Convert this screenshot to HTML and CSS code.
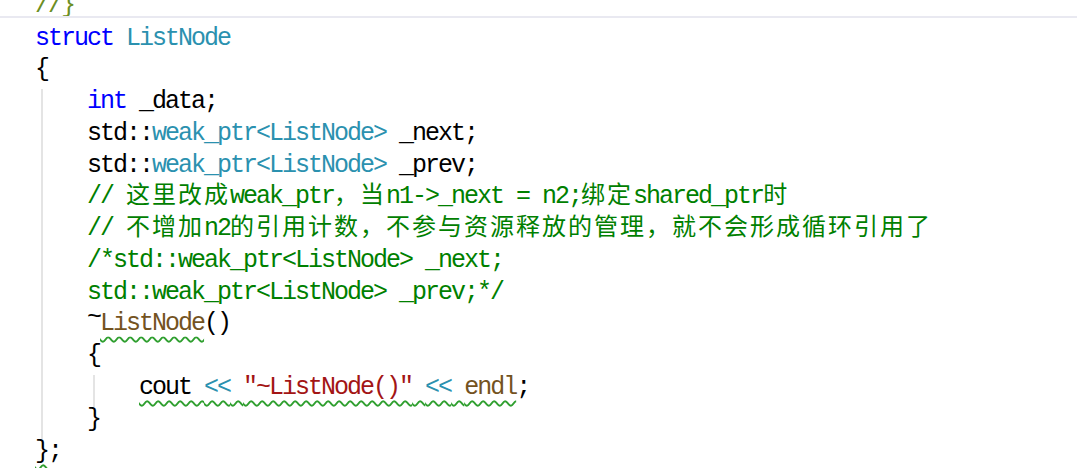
FILE: index.html
```html
<!DOCTYPE html>
<html lang="zh-CN">
<head>
<meta charset="utf-8">
<title>ListNode</title>
<link rel="stylesheet" href="styles.css">
</head>
<body>
<div class="editor">
  <div class="header"><div class="row c-dim">//}</div></div>
  <div class="code">
    <div class="row"><span class="kw">struct</span> <span class="ty">ListNode</span></div>
    <div class="row">{</div>
    <div class="block">
      <div class="row"><span class="kw">int</span> _data;</div>
      <div class="row">std::<span class="ty">weak_ptr&lt;ListNode&gt;</span> _next;</div>
      <div class="row">std::<span class="ty">weak_ptr&lt;ListNode&gt;</span> _prev;</div>
      <div class="row cm">// <span class="cjk">这里改成</span>weak_ptr<span class="cjk">，当</span>n1-&gt;_next = n2;<span class="cjk">绑定</span>shared_ptr<span class="cjk">时</span></div>
      <div class="row cm">// <span class="cjk">不增加</span>n2<span class="cjk">的引用计数，不参与资源释放的管理，就不会形成循环引用了</span></div>
      <div class="row cm">/*std::weak_ptr&lt;ListNode&gt; _next;</div>
      <div class="row cm">std::weak_ptr&lt;ListNode&gt; _prev;*/</div>
      <div class="row"><span class="tilde">~</span><span class="sq"><span class="fn">ListNode</span></span>()</div>
      <div class="row">{</div>
      <div class="block">
        <div class="row"><span class="sq">cout <span class="op">&lt;&lt;</span> <span class="str">"~ListNode()"</span> <span class="op">&lt;&lt;</span> <span class="fn">endl</span></span>;</div>
      </div>
      <div class="row">}</div>
    </div>
    <div class="row"><span class="sq">}</span>;</div>
  </div>
</div>
</body>
</html>
```
FILE: styles.css
```css
html, body {
  margin: 0;
  padding: 0;
  background: #ffffff;
}

body {
  width: 1077px;
  height: 468px;
  overflow: hidden;
  font-family: "Liberation Mono", monospace;
  font-size: 25px;
  letter-spacing: -2px;
  color: #000000;
}

.header {
  height: 16px;
  overflow: hidden;
  border-bottom: 2px solid #e9e9f1;
  padding-left: 35px;
}

.header .row {
  margin-top: -10px;
}

.code {
  padding-top: 4.6px;
  padding-left: 35px;
}

.row {
  height: 31.77px;
  line-height: 31.77px;
  white-space: pre;
}

.block {
  position: relative;
  padding-left: 52px;
}

.block::before {
  content: "";
  position: absolute;
  left: 6px;
  top: 3px;
  bottom: -3px;
  width: 2px;
  background: #e4e4e4;
}

.kw { color: #0000ff; }
.ty { color: #2b91af; }
.fn { color: #74531f; }
.str { color: #a31515; }
.op { color: #2b91af; }
.cm { color: #008000; }
.c-dim { color: #6b8e23; }

.tilde {
  display: inline-block;
  transform: translateY(-6px);
}

.cjk {
  font-family: "Noto Sans CJK SC", sans-serif;
  font-size: 24px;
  letter-spacing: 2px;
  line-height: 1;
}

.sq {
  text-decoration-line: underline;
  text-decoration-style: wavy;
  text-decoration-color: #2f9f2f;
  text-decoration-thickness: 1.5px;
  text-underline-offset: 6px;
  text-decoration-skip-ink: none;
}
```
